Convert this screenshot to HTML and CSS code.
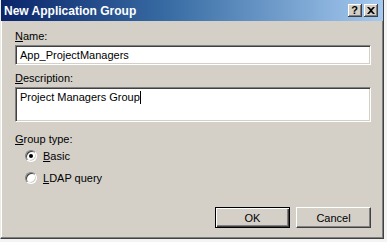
FILE: index.html
```html
<!DOCTYPE html>
<html>
<head>
<meta charset="utf-8">
<link rel="stylesheet" href="styles.css">
</head>
<body>
<div class="dialog">
  <div class="titlebar">
    <span class="title">New Application Group</span>
    <div class="tbtns">
      <span class="tbtn help">?</span>
      <span class="tbtn close">
        <svg width="8" height="7" viewBox="0 0 8 7"><path d="M0 0h2l2 2 2-2h2L5 3.5 8 7H6L4 5 2 7H0l3-3.5z" fill="#000"/></svg>
      </span>
    </div>
  </div>
  <div class="content">
    <div class="label"><u>N</u>ame:</div>
    <div class="field single">App_ProjectManagers</div>
    <div class="label desc"><u>D</u>escription:</div>
    <div class="field multi">Project Managers Group<span class="caret"></span></div>
    <div class="label gtype"><u>G</u>roup type:</div>
    <div class="radios">
      <div class="radio-row"><span class="radio checked"></span><span><u>B</u>asic</span></div>
      <div class="radio-row"><span class="radio"></span><span><u>L</u>DAP query</span></div>
    </div>
    <div class="buttons">
      <div class="btn default"><span>OK</span></div>
      <div class="btn"><span>Cancel</span></div>
    </div>
  </div>
</div>
</body>
</html>
```
FILE: styles.css
```css
html, body {
  margin: 0;
  padding: 0;
  background: #f4f4f2;
}
body {
  font-family: "Liberation Sans", Arial, sans-serif;
  font-size: 11px;
  color: #000;
}
.dialog {
  width: 382px;
  height: 238px;
  background: #d4d0c8;
  border-left: 1px solid #ecebe6;
  border-right: 1px solid #404040;
  border-bottom: 1px solid #404040;
  box-shadow: inset -1px -1px 0 #808080, inset 1px 0 0 #ffffff;
  display: flex;
  flex-direction: column;
}
.titlebar {
  height: 21px;
  background: linear-gradient(to right, #0a246a 0%, #3a6ea5 45%, #a6caf0 100%);
  display: flex;
  align-items: center;
  justify-content: space-between;
  padding: 0 5px 0 3px;
}
.title {
  color: #fff;
  font-weight: bold;
  font-size: 12px;
  font-family: "Liberation Sans", Arial, sans-serif;
}
.tbtns {
  display: flex;
  gap: 2px;
}
.tbtn {
  width: 14px;
  height: 13px;
  background: #d4d0c8;
  box-shadow: inset -1px -1px 0 #404040, inset 1px 1px 0 #fff, inset -2px -2px 0 #808080;
  display: flex;
  align-items: center;
  justify-content: center;
  font-weight: bold;
  font-size: 11px;
  line-height: 1;
}
.help { padding-right: 1px; box-sizing: border-box; }
.content {
  flex: 1;
  display: flex;
  flex-direction: column;
  padding: 9px 12px 10px 14px;
}
.label {
  line-height: 13px;
  height: 13px;
  color: #000;
}
.field {
  margin-top: 2px;
  background: #fff;
  box-sizing: border-box;
  border-top: 1px solid #808080;
  border-left: 1px solid #808080;
  border-right: 1px solid #fff;
  border-bottom: 1px solid #fff;
  box-shadow: inset 1px 1px 0 #404040, inset -1px -1px 0 #d4d0c8;
  padding: 3px 4px;
  line-height: 13px;
}
.single {
  height: 20px;
  padding-top: 3px;
}
.desc { margin-top: 7px; }
.multi {
  height: 35px;
  padding-top: 3px;
}
.caret {
  display: inline-block;
  width: 1px;
  height: 13px;
  background: #000;
  vertical-align: top;
}
.gtype { margin-top: 11px; }
.radios {
  display: flex;
  flex-direction: column;
  gap: 6px;
  margin-top: 2px;
  padding-left: 10px;
}
.radio-row {
  display: flex;
  align-items: center;
  gap: 6px;
  height: 16px;
}
.radio {
  width: 12px;
  height: 12px;
  border-radius: 50%;
  box-sizing: border-box;
  background: #fff;
  border: 1px solid;
  border-color: #808080 #fff #fff #808080;
  box-shadow: inset 1px 1px 0 #404040, inset -1px -1px 0 #d4d0c8;
  position: relative;
}
.radio.checked::after {
  content: "";
  position: absolute;
  left: 3px;
  top: 3px;
  width: 4px;
  height: 4px;
  border-radius: 50%;
  background: #000;
}
.buttons {
  margin-top: auto;
  display: flex;
  justify-content: flex-end;
  gap: 6px;
}
.btn {
  width: 75px;
  height: 21px;
  box-sizing: border-box;
  background: #d4d0c8;
  border: 1px solid #404040;
  border-top-color: #fff;
  border-left-color: #fff;
  box-shadow: inset -1px -1px 0 #808080;
  display: flex;
  align-items: center;
  justify-content: center;
}
.btn.default {
  border: 1px solid #000;
  box-shadow: inset 1px 1px 0 #fff, inset -1px -1px 0 #404040, inset -2px -2px 0 #808080;
}
```
